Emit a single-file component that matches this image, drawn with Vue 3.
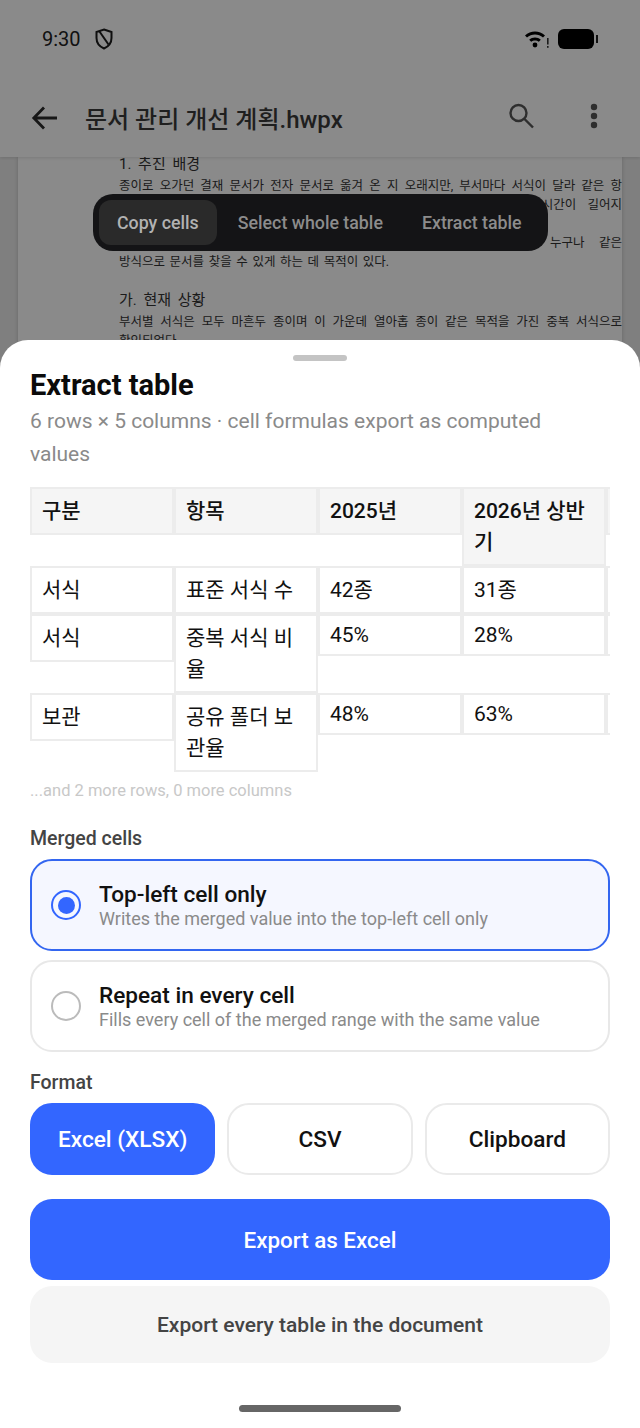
<script setup>
import { ref } from 'vue'

const docLines = [
  { text: '1. 추진 배경', head: true },
  { text: '종이로 오가던 결재 문서가 전자 문서로 옮겨 온 지 오래지만, 부서마다 서식이 달라 같은 항', fill: true },
  { text: '목을 여러 번 입력하고 담당자가 바뀌면 이전 문서를 찾는 데 드는 시간이 길어지', fill: true },
  { text: '고 있다.' },
  { text: '이 계획은 문서를 한곳에서 관리하고, 서식과 보관 위치를 통일해 누구나 같은', fill: true },
  { text: '방식으로 문서를 찾을 수 있게 하는 데 목적이 있다.' },
  { text: '', gap: true },
  { text: '가. 현재 상황', head: true },
  { text: '부서별 서식은 모두 마흔두 종이며 이 가운데 열아홉 종이 같은 목적을 가진 중복 서식으로', fill: true },
  { text: '확인되었다.' }
]

// short: the value columns hold latin text only, so those cells are lower
const rows = [
  { head: true, cells: ['구분', '항목', '2025년', '2026년 상반기', ''] },
  { cells: ['서식', '표준 서식 수', '42종', '31종', ''] },
  { short: true, cells: ['서식', '중복 서식 비율', '45%', '28%', ''] },
  { short: true, cells: ['보관', '공유 폴더 보관율', '48%', '63%', ''] }
]

const merged = ref('topleft')
const format = ref('xlsx')

const mergeOptions = [
  { id: 'topleft', title: 'Top-left cell only', desc: 'Writes the merged value into the top-left cell only' },
  { id: 'repeat', title: 'Repeat in every cell', desc: 'Fills every cell of the merged range with the same value' }
]

const formats = [
  { id: 'xlsx', label: 'Excel (XLSX)' },
  { id: 'csv', label: 'CSV' },
  { id: 'clip', label: 'Clipboard' }
]
</script>

<template>
  <div class="screen">
    <div class="page">
      <div class="topbar">
        <div class="status">
          <span class="time">9:30</span>
          <svg class="shield" width="18" height="22" viewBox="0 0 18 22" fill="none" stroke="#1c1c1c" stroke-width="2">
            <path d="M9 1.500 L16.500 4 V10 C16.500 15 13.500 18.500 9 20.500 C4.500 18.500 1.500 15 1.500 10 V4 Z" />
            <path d="M4.500 3.500 L13.500 16.500" />
          </svg>
          <span class="spacer"></span>
          <svg class="wifi" width="26" height="20" viewBox="0 0 26 20" fill="#000">
            <path d="M1 6.600 C6.500 1.200 15.500 1.200 21 6.600 L19 8.600 C14.600 4.400 7.400 4.400 3 8.600 Z" />
            <path d="M5.200 10.800 C8.400 7.700 13.600 7.700 16.800 10.800 L14.800 12.800 C12.700 10.900 9.300 10.900 7.200 12.800 Z" />
            <circle cx="11" cy="16" r="2.400" />
            <rect x="23" y="9" width="1.600" height="6.500" fill="#333" />
            <rect x="23" y="17" width="1.600" height="1.800" fill="#333" />
          </svg>
          <div class="battery"><span class="cap"></span></div>
        </div>
        <div class="appbar">
          <svg class="back" width="30" height="30" viewBox="0 0 30 30" fill="none" stroke="#2b2b2b" stroke-width="2.800">
            <path d="M27 15 H4.500 M14 4.500 L3.800 15 L14 25.500" />
          </svg>
          <span class="doc-title">문서 관리 개선 계획.hwpx</span>
          <svg class="search" width="28" height="28" viewBox="0 0 28 28" fill="none" stroke="#555" stroke-width="2.400">
            <circle cx="11.500" cy="11" r="8" />
            <path d="M17.500 17 L26 25.500" />
          </svg>
          <svg class="more" width="8" height="26" viewBox="0 0 8 26" fill="#555">
            <circle cx="4" cy="4" r="3.200" />
            <circle cx="4" cy="13" r="3.200" />
            <circle cx="4" cy="22" r="3.200" />
          </svg>
        </div>
      </div>

      <div class="paper">
        <div
          v-for="(line, i) in docLines"
          :key="i"
          class="doc-line"
          :class="{ 'doc-head': line.head, 'doc-fill': line.fill, 'doc-gap': line.gap }"
        >{{ line.text }}</div>
      </div>
    </div>

    <div class="scrim"></div>

    <div class="selection-bar">
      <button class="sel-btn sel-active">Copy cells</button>
      <button class="sel-btn">Select whole table</button>
      <button class="sel-btn">Extract table</button>
    </div>

    <div class="sheet">
      <div class="handle"></div>
      <h1 class="title">Extract table</h1>
      <p class="subtitle">6 rows × 5 columns · cell formulas export as computed values</p>

      <div class="table">
        <div v-for="(row, r) in rows" :key="r" class="t-row">
          <div
            v-for="(cell, c) in row.cells"
            :key="c"
            class="t-cell"
            :class="{ 't-head': row.head, 't-short': row.short && c >= 2 }"
          >{{ cell }}</div>
        </div>
      </div>
      <div class="more-note">...and 2 more rows, 0 more columns</div>

      <div class="label merged-label">Merged cells</div>
      <div class="options">
        <div
          v-for="opt in mergeOptions"
          :key="opt.id"
          class="option"
          :class="{ 'option-on': merged === opt.id }"
          @click="merged = opt.id"
        >
          <span class="radio"><span class="dot"></span></span>
          <div class="opt-text">
            <div class="opt-title">{{ opt.title }}</div>
            <div class="opt-desc">{{ opt.desc }}</div>
          </div>
        </div>
      </div>

      <div class="label format-label">Format</div>
      <div class="formats">
        <button
          v-for="f in formats"
          :key="f.id"
          class="format"
          :class="{ 'format-on': format === f.id }"
          @click="format = f.id"
        >{{ f.label }}</button>
      </div>

      <button class="export">Export as Excel</button>
      <button class="export-all">Export every table in the document</button>

      <div class="home"></div>
    </div>
  </div>
</template>

<style scoped>
.screen {
  position: relative;
  width: 640px;
  height: 1428px;
  overflow: hidden;
  background: #ebebeb;
  font-family: Roboto, "Noto Sans CJK KR", sans-serif;
}

.topbar {
  position: relative;
  height: 157px;
  background: #fff;
  box-shadow: 0 1px 3px rgba(0, 0, 0, 0.12);
}

.status {
  display: flex;
  align-items: center;
  height: 30px;
  padding: 24px 42px 0 42px;
}

.time {
  font-size: 20px;
  color: #222;
}

.shield {
  margin-left: 14px;
}

.spacer {
  flex: 1;
}

.wifi {
  margin-right: 8px;
}

.battery {
  position: relative;
  width: 36px;
  height: 20px;
  border-radius: 6px;
  background: #000;
  margin-right: 4px;
}

.cap {
  position: absolute;
  right: -4px;
  top: 6px;
  width: 2px;
  height: 8px;
  background: #222;
}

.appbar {
  display: flex;
  align-items: center;
  padding: 46px 42px 0 30px;
}

.back {
  margin-right: 25px;
}

.doc-title {
  flex: 1;
  font-size: 24px;
  font-weight: 500;
  color: #3a3a3a;
}

.search {
  margin-right: 55px;
  margin-top: -4px;
}

.more {
  margin-top: -4px;
}

.paper {
  height: 300px;
  margin: 0 18px;
  padding-left: 101px;
  background: #fff;
  box-shadow: 0 0 4px rgba(0, 0, 0, 0.2);
}

.doc-line {
  height: 19.200px;
  line-height: 19px;
  font-size: 12.500px;
  word-spacing: 1.500px;
  color: #333;
  white-space: nowrap;
}

.doc-fill {
  white-space: normal;
  text-align: justify;
  text-align-last: justify;
}

.doc-head {
  height: 18.500px;
  font-size: 15px;
  line-height: 14px;
  word-spacing: 3px;
}

.doc-gap {
  height: 22px;
}

.scrim {
  position: absolute;
  inset: 0;
  background: rgba(0, 0, 0, 0.46);
}

.selection-bar {
  position: absolute;
  left: 93px;
  top: 194px;
  display: flex;
  align-items: center;
  width: 455px;
  height: 57px;
  box-sizing: border-box;
  padding: 0 6px;
  background: #141416;
  border-radius: 20px;
}

.sel-btn {
  height: 45px;
  padding: 0 18px;
  margin-right: 3px;
  border: none;
  border-radius: 12px;
  background: none;
  font-family: inherit;
  font-size: 17.800px;
  font-weight: 500;
  color: #8c8c8c;
  white-space: nowrap;
}

.sel-active {
  background: #2a2a2a;
  color: #b2b2b2;
}

.sheet {
  position: absolute;
  left: 0;
  right: 0;
  bottom: 0;
  height: 1088px;
  box-sizing: border-box;
  padding: 15px 30px 0;
  background: #fff;
  border-radius: 28px 28px 0 0;
}

.handle {
  width: 54px;
  height: 6px;
  margin: 0 auto;
  border-radius: 3px;
  background: #c4c4c4;
}

.title {
  margin: 4px 0 0;
  font-size: 29px;
  line-height: 40px;
  font-weight: 700;
  color: #0b0b0b;
}

.subtitle {
  max-width: 560px;
  margin: 0;
  font-size: 21px;
  line-height: 33px;
  color: #8a8a8a;
}

.table {
  width: 580px;
  margin-top: 16px;
  overflow: hidden;
}

.t-row {
  display: flex;
  align-items: flex-start;
}

.t-cell {
  flex: 0 0 144px;
  box-sizing: border-box;
  min-height: 48px;
  padding: 7px 10px 6px;
  border: 2px solid #ececec;
  font-size: 21px;
  line-height: 31px;
  color: #111;
}

.t-short {
  min-height: 42px;
  line-height: 25px;
}

.t-head {
  background: #f5f5f5;
  font-weight: 500;
}

.more-note {
  margin-top: 9px;
  font-size: 16.500px;
  color: #c8c8c8;
}

.label {
  font-size: 19.500px;
  line-height: 23px;
  font-weight: 500;
  color: #444;
}

.merged-label {
  margin-top: 27px;
}

.options {
  display: flex;
  flex-direction: column;
  gap: 9px;
  margin-top: 9px;
}

.option {
  display: flex;
  align-items: center;
  height: 92px;
  box-sizing: border-box;
  padding: 0 19px;
  border: 2px solid #e8e8e8;
  border-radius: 22px;
  background: #fff;
}

.option-on {
  border-color: #3366f0;
  background: #f5f7ff;
}

.radio {
  display: flex;
  align-items: center;
  justify-content: center;
  flex: none;
  width: 30px;
  height: 30px;
  box-sizing: border-box;
  border: 2.500px solid #bbb;
  border-radius: 50%;
  margin-right: 18px;
}

.option-on .radio {
  border-color: #3366ff;
}

.dot {
  display: none;
  width: 17px;
  height: 17px;
  border-radius: 50%;
  background: #3366ff;
}

.option-on .dot {
  display: block;
}

.opt-title {
  font-size: 22.600px;
  font-weight: 500;
  color: #111;
}

.opt-desc {
  font-size: 18px;
  color: #8a8a8a;
}

.format-label {
  margin-top: 19px;
}

.formats {
  display: flex;
  gap: 12px;
  margin-top: 9px;
}

.format {
  flex: 1;
  height: 72px;
  box-sizing: border-box;
  border: 2px solid #eaeaea;
  border-radius: 22px;
  background: #fff;
  font-family: inherit;
  font-size: 22.600px;
  font-weight: 500;
  color: #111;
}

.format-on {
  border-color: #3366ff;
  background: #3366ff;
  color: #fff;
}

.export {
  display: block;
  width: 100%;
  height: 81px;
  margin-top: 24px;
  border: none;
  border-radius: 22px;
  background: #3366ff;
  color: #fff;
  font-family: inherit;
  font-size: 22.400px;
  font-weight: 500;
}

.export-all {
  display: block;
  width: 100%;
  height: 77px;
  margin-top: 6px;
  border: none;
  border-radius: 22px;
  background: #f5f5f5;
  color: #444;
  font-family: inherit;
  font-size: 21px;
  font-weight: 500;
}

.home {
  width: 162px;
  height: 7px;
  margin: 42px auto 0;
  border-radius: 4px;
  background: #666;
}
</style>
